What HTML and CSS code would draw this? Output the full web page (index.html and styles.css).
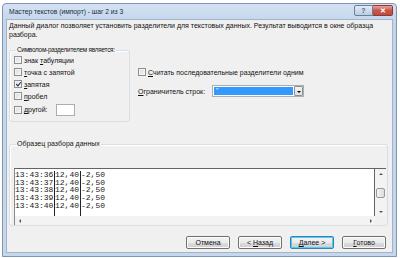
FILE: index.html
```html
<!DOCTYPE html>
<html lang="ru">
<head>
    <meta charset="UTF-8">
    <title>Мастер текстов (импорт) - шаг 2 из 3</title>
    <link rel="stylesheet" href="styles.css">
</head>
<body>
    <div class="window">
        <div class="titlebar">
            <span class="title">Мастер текстов (импорт) - шаг 2 из 3</span>
            <div class="caption-buttons">
                <span class="cap-btn help">?</span>
                <span class="cap-btn close">✕</span>
            </div>
        </div>

        <div class="client">
            <p class="intro">Данный диалог позволяет установить разделители для текстовых данных. Результат выводится в окне образца разбора.</p>

            <div class="options">
                <fieldset class="group delims">
                    <legend class="tight">Символом-разделителем является:</legend>
                    <label class="check-row"><span class="checkbox"></span><span>знак <u>т</u>абуляции</span></label>
                    <label class="check-row"><span class="checkbox"></span><span><u>т</u>очка с запятой</span></label>
                    <label class="check-row"><span class="checkbox checked"></span><span><u>з</u>апятая</span></label>
                    <label class="check-row"><span class="checkbox"></span><span><u>п</u>робел</span></label>
                    <label class="check-row other"><span class="checkbox"></span><span><u>д</u>ругой:</span><span class="textbox"></span></label>
                </fieldset>

                <div class="side">
                    <label class="check-row"><span class="checkbox"></span><span><u>С</u>читать последовательные разделители одним</span></label>
                    <div class="combo-row">
                        <span class="combo-label"><u>О</u>граничитель строк:</span>
                        <div class="combo">
                            <span class="combo-value">"</span>
                            <span class="combo-arrow"></span>
                        </div>
                    </div>
                </div>
            </div>

            <fieldset class="group preview">
                <legend>Образец разбора данных</legend>
                <div class="preview-box">
                    <div class="preview-data">
                        <div class="col c1">
                            <div>13:43:36</div>
                            <div>13:43:37</div>
                            <div>13:43:38</div>
                            <div>13:43:39</div>
                            <div>13:43:40</div>
                        </div>
                        <div class="col c2">
                            <div>12,40</div>
                            <div>12,40</div>
                            <div>12,40</div>
                            <div>12,40</div>
                            <div>12,40</div>
                        </div>
                        <div class="col c3">
                            <div>-2,50</div>
                            <div>-2,50</div>
                            <div>-2,50</div>
                            <div>-2,50</div>
                            <div>-2,50</div>
                        </div>
                    </div>
                    <div class="vscroll">
                        <span class="arrow up"></span>
                        <span class="thumb"></span>
                        <span class="arrow down"></span>
                    </div>
                    <div class="hscroll">
                        <span class="arrow left"></span>
                        <span class="arrow right"></span>
                    </div>
                    <div class="corner"></div>
                </div>
            </fieldset>

            <div class="buttons">
                <button class="btn">Отмена</button>
                <button class="btn">&lt; <u>Н</u>азад</button>
                <button class="btn default"><u>Д</u>алее &gt;</button>
                <button class="btn"><u>Г</u>отово</button>
            </div>
        </div>
    </div>
</body>
</html>
```

FILE: styles.css
```css
/* --- Page --- */
* {
    margin: 0;
    padding: 0;
    box-sizing: border-box;
}

body {
    width: 400px;
    height: 258px;
    overflow: hidden;
    background: #fff;
    font-family: 'Liberation Sans', Arial, sans-serif;
    font-size: 7px;
    color: #111;
}

u {
    text-decoration: underline;
    text-underline-offset: 1px;
}

/* --- Window frame --- */
.window {
    margin: 3px 0 0 2px;
    width: 395px;
    height: 254px;
    border: 1px solid #7f95b3;
    border-radius: 4px 4px 0 0;
    background: linear-gradient(#d3e1f2, #c3d5eb 20px, #c6d7ec);
    padding: 0 3px 3px 3px;
    display: flex;
    flex-direction: column;
}

.titlebar {
    height: 15px;
    display: flex;
    align-items: center;
    justify-content: space-between;
}

.title {
    padding-left: 3px;
    color: #1b2a3e;
    font-size: 6.7px;
}

.caption-buttons {
    display: flex;
    align-self: flex-start;
    margin-top: 1px;
}

.cap-btn {
    height: 11px;
    display: flex;
    justify-content: center;
    align-items: center;
    border: 1px solid #6c7f99;
    color: #fff;
    font-size: 7px;
    font-weight: bold;
}

.cap-btn.help {
    width: 19px;
    border-radius: 2px 0 0 2px;
    background: linear-gradient(#e3ebf5, #b9cbe2);
    color: #4e6584;
}

.cap-btn.close {
    width: 20px;
    border-left: none;
    border-radius: 0 2px 2px 0;
    background: linear-gradient(#e8a698, #c9554a 50%, #c0483c);
    border-color: #8c3a33;
}

/* --- Client area --- */
.client {
    flex: 1;
    background: #f0f0f0;
    border: 1px solid #a3b4ca;
    padding: 2px 4px 0 1px;
    display: flex;
    flex-direction: column;
}

.intro {
    line-height: 8.5px;
    padding-left: 1px;
}

/* --- Group boxes --- */
.group {
    border: 1px solid #d5dfe5;
    border-radius: 3px;
    box-shadow: inset 1px 1px 0 #fff;
    margin-left: 1px;
    min-width: 0;
}

.group legend {
    margin-left: 2px;
    padding: 0 1px;
    line-height: 8px;
    white-space: nowrap;
}

.group legend.tight {
    font-size: 6.4px;
    letter-spacing: -0.25px;
}

/* --- Checkbox rows --- */
.check-row {
    display: flex;
    align-items: center;
    height: 12px;
    gap: 2px;
    white-space: nowrap;
}

.checkbox {
    width: 8px;
    height: 8px;
    border: 1px solid #8e8f8f;
    background: linear-gradient(135deg, #dcdcdc, #f6f6f6);
    box-shadow: inset 0 0 0 1px #f4f4f4;
    position: relative;
    flex-shrink: 0;
}

.checkbox.checked::after {
    content: '';
    position: absolute;
    left: 2px;
    top: 0;
    width: 2px;
    height: 4px;
    border: solid #1c2b4b;
    border-width: 0 1.5px 1.5px 0;
    transform: rotate(40deg);
}

/* --- Options area --- */
.options {
    display: flex;
    gap: 8px;
    margin-top: 7px;
}

.delims {
    flex: 0 0 121px;
    width: 121px;
    height: 76px;
    padding: 0 4px;
}

.other .textbox {
    margin-left: 6px;
    width: 19px;
    height: 12px;
    border: 1px solid #abadb3;
    background: #fff;
}

.check-row.other {
    height: 13px;
    margin-top: 1px;
}

.side {
    padding-top: 20px;
    display: flex;
    flex-direction: column;
    gap: 7px;
}

.combo-row {
    display: flex;
    align-items: center;
}

.combo-label {
    width: 74px;
}

.combo {
    width: 92px;
    height: 12px;
    border: 1px solid #abadb3;
    background: #fff;
    display: flex;
    padding: 1px;
}

.combo-value {
    flex: 1;
    background: #3399ff;
    color: #fff;
    line-height: 8px;
    padding-left: 2px;
}

.combo-arrow {
    width: 9px;
    margin: -1px -1px -1px 1px;
    border: 1px solid #8b9097;
    border-radius: 1px;
    background: linear-gradient(#f3f3f3, #e0e0e0);
    position: relative;
}

.combo-arrow::after {
    content: '';
    position: absolute;
    left: 2px;
    top: 4px;
    border: 2px solid transparent;
    border-top: 2px solid #000;
}

/* --- Preview --- */
.preview {
    margin-top: 18px;
    height: 86px;
    padding: 20px 4px 0 4px;
}

.preview-box {
    display: grid;
    grid-template-columns: 1fr 11px;
    grid-template-rows: 47px 9px;
    border-top: 1px solid #646464;
    border-left: 1px solid #8a8a8a;
    width: 372px;
}

.preview-data {
    background: #fff;
    display: flex;
    padding-top: 2px;
    border-right: 1px solid #646464;
    font-family: 'Liberation Mono', 'Courier New', monospace;
    font-size: 8px;
    line-height: 7.7px;
    color: #222;
    overflow: hidden;
}

.col {
    flex-shrink: 0;
    white-space: nowrap;
}

.col.c1 {
    width: 40px;
    border-right: 1px solid #222;
}

.col.c2 {
    width: 26px;
    border-right: 1px solid #222;
}

.vscroll {
    background: #f3f3f3;
    display: flex;
    flex-direction: column;
    align-items: center;
    justify-content: space-between;
    padding: 4px 0 3px;
}

.thumb {
    width: 9px;
    height: 10px;
    border: 1px solid #9a9a9a;
    border-radius: 2px;
    background: linear-gradient(90deg, #f4f4f4, #dcdcdc);
}

.arrow {
    width: 0;
    height: 0;
    border: 2px solid transparent;
}

.arrow.up {
    border-bottom: 2px solid #555;
    border-top: 0;
}

.arrow.down {
    border-top: 2px solid #555;
    border-bottom: 0;
}

.hscroll {
    background: #f3f3f3;
    display: flex;
    justify-content: space-between;
    align-items: center;
    padding: 0 3px 0 4px;
}

.arrow.left {
    border-right: 2px solid #555;
    border-left: 0;
}

.arrow.right {
    border-left: 2px solid #555;
    border-right: 0;
}

.corner {
    background: #f0f0f0;
}

/* --- Buttons --- */
.buttons {
    display: flex;
    justify-content: flex-end;
    gap: 8px;
    margin-top: 10px;
    padding-right: 2px;
}

.btn {
    width: 44px;
    height: 13px;
    font-family: inherit;
    font-size: 7px;
    color: #111;
    border: 1px solid #707070;
    border-radius: 2px;
    background: linear-gradient(#f2f2f2, #ebebeb 50%, #dddddd 50%, #cfcfcf);
    box-shadow: inset 0 0 0 1px #fcfcfc;
}

.btn.default {
    border-color: #3c7fb1;
    box-shadow: inset 0 0 0 1px #48d0f6;
}
```
